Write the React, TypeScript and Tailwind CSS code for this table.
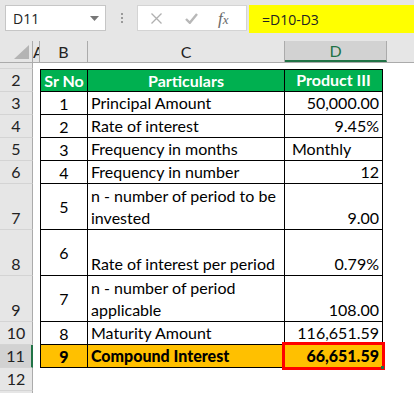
import React from 'react';

type Row = {
  n: number;
  h: number;
  sr?: string;
  label?: string[];
  value?: string;
  valueAlign?: 'left' | 'right';
  head?: boolean;
  total?: boolean;
};

const rows: Row[] = [
  { n: 2, h: 23, sr: 'Sr No', label: ['Particulars'], value: 'Product III', head: true },
  { n: 3, h: 23, sr: '1', label: ['Principal Amount'], value: '50,000.00' },
  { n: 4, h: 23, sr: '2', label: ['Rate of interest'], value: '9.45%' },
  { n: 5, h: 23, sr: '3', label: ['Frequency in months'], value: 'Monthly', valueAlign: 'left' },
  { n: 6, h: 23, sr: '4', label: ['Frequency in number'], value: '12' },
  { n: 7, h: 46, sr: '5', label: ['n - number of period to be', 'invested'], value: '9.00' },
  { n: 8, h: 46, sr: '6', label: ['Rate of interest per period'], value: '0.79%' },
  { n: 9, h: 46, sr: '7', label: ['n - number of period', 'applicable'], value: '108.00' },
  { n: 10, h: 23, sr: '8', label: ['Maturity Amount'], value: '116,651.59' },
  { n: 11, h: 23, sr: '9', label: ['Compound Interest'], value: '66,651.59', total: true },
];

const cellFont = { fontFamily: 'Lato, "Open Sans", sans-serif' };

const RowHeader: React.FC<{ n?: number; h: number; active?: boolean }> = ({ n, h, active }) => (
  <div
    className={`w-[33px] shrink-0 flex items-end justify-center border-b border-[#d4d4d4] text-[16px] leading-[22px] text-[#222] ${
      active ? 'bg-[#d2d2d2] border-r-2 border-r-[#217346]' : 'bg-[#e6e6e6] border-r border-r-[#ababab]'
    }`}
    style={{ height: h, ...cellFont }}
  >
    {n}
  </div>
);

const App: React.FC = () => {
  return (
    <div className="w-[414px] h-[393px] overflow-hidden bg-[#e6e6e6] relative" style={cellFont}>
      {/* formula bar */}
      <div className="h-[41px] flex items-start pt-[5px] pl-[5px]">
        <div
          className="w-[101px] h-[26px] bg-white border border-[#c6c6c6] flex items-center justify-between pl-[7px] pr-[6px] text-[14px] text-[#222]"
          style={{ fontFamily: '"Open Sans", sans-serif' }}
        >
          D11
          <svg width="9" height="5" viewBox="0 0 9 5">
            <path d="M0 0h9L4.5 5z" fill="#777" />
          </svg>
        </div>
        <div className="w-[31px] h-[26px] flex flex-col items-center justify-center gap-[2px]">
          <span className="w-[2px] h-[2px] bg-[#9a9a9a]" />
          <span className="w-[2px] h-[2px] bg-[#9a9a9a]" />
          <span className="w-[2px] h-[2px] bg-[#9a9a9a]" />
        </div>
        <div className="w-[110px] h-[26px] bg-white border border-[#d4d4d4] flex items-center">
          <svg className="ml-[13px]" width="11" height="11" viewBox="0 0 11 11">
            <path d="M0.5 0.5l10 10M10.5 0.5l-10 10" stroke="#b0b0b0" strokeWidth="1.3" />
          </svg>
          <svg className="ml-[23px]" width="13" height="11" viewBox="0 0 13 11">
            <path d="M1 6l3.8 3.8L12 1" stroke="#b8b8b8" strokeWidth="2.4" fill="none" />
          </svg>
          <span
            className="ml-[20px] text-[17px] leading-none italic text-[#6a6a6a]"
            style={{ fontFamily: '"Liberation Serif", serif' }}
          >
            f<span className="text-[13px]">x</span>
          </span>
        </div>
        <div
          className="ml-[2px] flex-1 h-[28px] bg-[#ffff00] flex items-center pl-[13px] text-[14px] text-[#222]"
          style={{ fontFamily: '"Open Sans", sans-serif' }}
        >
          =D10-D3
        </div>
      </div>

      {/* column headers */}
      <div className="h-[22px] flex border-b border-[#ababab] text-[16px] text-[#222]">
        <div className="w-[33px] shrink-0 border-r border-[#ababab] flex items-end justify-end pr-[3px] pb-[3px]">
          <svg width="15" height="14" viewBox="0 0 15 14">
            <path d="M15 0v14H0z" fill="#b4b4b4" />
          </svg>
        </div>
        <div className="w-[7px] shrink-0 border-r border-[#ababab] overflow-hidden flex items-center justify-start">
          A
        </div>
        <div className="w-[48px] shrink-0 border-r border-[#ababab] flex items-center justify-center">B</div>
        <div className="w-[197px] shrink-0 border-r border-[#ababab] flex items-center justify-center">C</div>
        <div className="w-[102px] shrink-0 bg-[#d2d2d2] border-r border-[#ababab] border-b-2 border-b-[#217346] flex items-center justify-center text-[#217346]">
          D
        </div>
        <div className="flex-1" />
      </div>

      {/* sheet body */}
      <div className="flex">
        <RowHeader h={6} />
        <div className="flex-1 bg-white" />
      </div>
      {rows.map((r) => {
        const bg = r.head ? 'bg-[#00b050]' : r.total ? 'bg-[#ffc000]' : 'bg-white';
        const txt = r.head ? 'text-white font-bold' : r.total ? 'text-black font-black' : 'text-black';
        return (
          <div key={r.n} className="flex text-[16px] leading-[23px]" style={{ height: r.h }}>
            <RowHeader n={r.n} h={r.h} active={r.total} />
            <div className="w-[7px] shrink-0 bg-white" />
            <div
              className={`w-[48px] shrink-0 border-l border-b border-r border-black flex items-center justify-center ${bg} ${txt} ${
                r.head ? 'border-t' : ''
              }`}
            >
              {r.sr}
            </div>
            <div
              className={`w-[197px] shrink-0 border-b border-r border-black flex flex-col ${
                r.head ? 'border-t items-center justify-center' : 'justify-end pl-[3px]'
              } ${bg} ${txt}`}
            >
              {r.label?.map((l) => (
                <div key={l} className="h-[22px] leading-[22px] whitespace-nowrap">
                  {l}
                </div>
              ))}
            </div>
            <div
              className={`w-[98px] shrink-0 border-b border-r border-black flex items-end ${
                r.head ? 'border-t justify-center items-center' : r.valueAlign === 'left' ? 'justify-start pl-[7px]' : 'justify-end pr-[3px]'
              } ${bg} ${txt} ${r.total ? 'relative' : ''}`}
            >
              <span className="h-[22px] leading-[22px] whitespace-nowrap">{r.value}</span>
              {r.total && (
                <div className="absolute left-[-3px] top-[-3px] right-[-3px] bottom-[-3px] border-[3px] border-[#ff0000]">
                  <div className="absolute right-[-2px] bottom-[-2px] w-[3px] h-[3px] bg-[#217346]" />
                </div>
              )}
            </div>
            <div className="flex-1 bg-white" />
          </div>
        );
      })}
      <div className="flex">
        <RowHeader n={12} h={23} />
        <div className="flex-1 bg-white" />
      </div>
      <div className="flex h-[10px]">
        <RowHeader h={10} />
        <div className="flex-1 bg-white" />
      </div>
    </div>
  );
};

export default App;
